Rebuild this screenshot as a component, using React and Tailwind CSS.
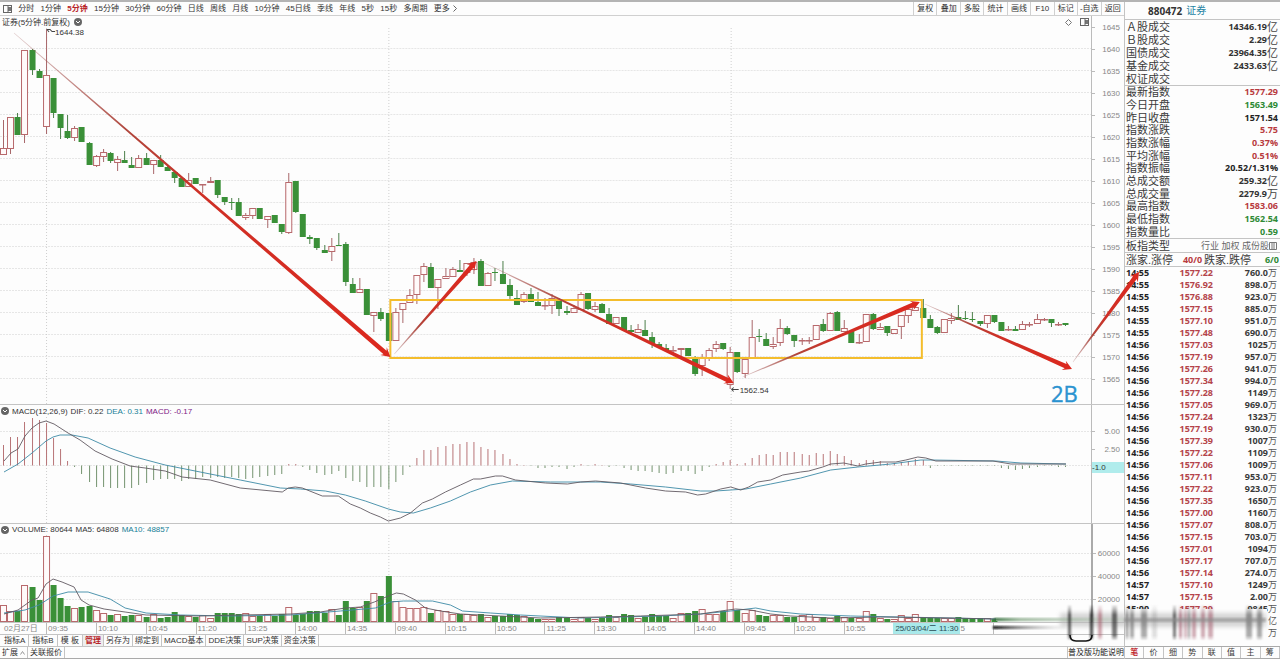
import React, { useState } from "react";

const PERIODS = [
  "分时", "1分钟", "5分钟", "15分钟", "30分钟", "60分钟", "日线", "周线", "月线",
  "10分钟", "45日线", "季线", "年线", "5秒", "15秒", "多周期",
];
const TOOLS = ["复权", "叠加", "多股", "统计", "画线", "F10", "标记", "-自选", "返回"];
const INDICATORS = ["指标A", "指标B", "模 板"];
const TEMPLATES = ["管理", "另存为", "绑定到", "MACD基本", "DDE决策", "SUP决策", "资金决策"];
const SIDE_TABS = ["笔", "价", "细", "势", "联", "值", "主", "筹"];

const TIMES = [
  "09:35", "10:10", "10:45", "11:20", "13:25", "14:00", "14:35", "09:40", "10:15",
  "10:50", "11:25", "13:30", "14:05", "14:40", "09:45", "10:20", "10:55",
];
const PRICES = [
  1645, 1640, 1635, 1630, 1625, 1620, 1615, 1610, 1605,
  1600, 1595, 1590, 1585, 1580, 1575, 1570, 1565,
];

const TURNOVER = [
  ["Ａ股成交", "14346.19", "亿"],
  ["Ｂ股成交", "2.29", "亿"],
  ["国债成交", "23964.35", "亿"],
  ["基金成交", "2433.63", "亿"],
  ["权证成交", "", ""],
];

const QUOTE = [
  ["最新指数", "1577.29", "", "text-[#b83a3e]"],
  ["今日开盘", "1563.49", "", "text-[#2f8a35]"],
  ["昨日收盘", "1571.54", "", "text-[#222]"],
  ["指数涨跌", "5.75", "", "text-[#b83a3e]"],
  ["指数涨幅", "0.37%", "", "text-[#b83a3e]"],
  ["平均涨幅", "0.51%", "", "text-[#b83a3e]"],
  ["指数振幅", "20.52/1.31%", "", "text-[#222]"],
  ["总成交额", "259.32", "亿", "text-[#333]"],
  ["总成交量", "2279.9", "万", "text-[#333]"],
  ["最高指数", "1583.06", "", "text-[#b83a3e]"],
  ["最低指数", "1562.54", "", "text-[#2f8a35]"],
  ["指数量比", "0.59", "", "text-[#2f8a35]"],
];

const TRADES = [
  ["14:55", "1577.22", "760.0", "万"],
  ["14:55", "1576.92", "898.0", "万"],
  ["14:55", "1576.88", "923.0", "万"],
  ["14:55", "1577.15", "885.0", "万"],
  ["14:55", "1577.10", "951.0", "万"],
  ["14:55", "1577.48", "690.0", "万"],
  ["14:56", "1577.03", "1025", "万"],
  ["14:56", "1577.19", "957.0", "万"],
  ["14:56", "1577.26", "941.0", "万"],
  ["14:56", "1577.34", "994.0", "万"],
  ["14:56", "1577.28", "1149", "万"],
  ["14:56", "1577.05", "969.0", "万"],
  ["14:56", "1577.24", "1323", "万"],
  ["14:56", "1577.19", "930.0", "万"],
  ["14:56", "1577.39", "1007", "万"],
  ["14:56", "1577.22", "1109", "万"],
  ["14:56", "1577.06", "1009", "万"],
  ["14:56", "1577.11", "953.0", "万"],
  ["14:56", "1577.22", "923.0", "万"],
  ["14:56", "1577.35", "1650", "万"],
  ["14:56", "1577.00", "1160", "万"],
  ["14:56", "1577.07", "808.0", "万"],
  ["14:56", "1577.15", "703.0", "万"],
  ["14:56", "1577.01", "1094", "万"],
  ["14:56", "1577.17", "707.0", "万"],
  ["14:56", "1577.14", "274.0", "万"],
  ["14:57", "1577.10", "1249", "万"],
  ["14:57", "1577.15", "2.00", "万"],
  ["15:00", "1577.29", "9845", "万"],
  ["", "", "", "亿"],
  ["", "", "", "万"],
];

// up (1) or down (0), body top, body bottom, high, low
const CANDLES = [
  [1, 148, 155, 120, 155], [1, 117, 149, 117, 154], [0, 117, 135, 113, 135], [1, 50, 135, 50, 143],
  [0, 50, 70, 49, 75], [0, 71, 78, 69, 78], [1, 75, 127, 29, 134], [0, 78, 113, 78, 118],
  [0, 114, 128, 114, 139], [0, 131, 138, 115, 139], [1, 128, 138, 126, 141], [0, 127, 142, 127, 142],
  [0, 143, 165, 142, 165], [1, 156, 166, 155, 167], [1, 152, 157, 149, 162], [0, 153, 161, 152, 163],
  [1, 159, 163, 156, 171], [0, 160, 163, 151, 163], [0, 165, 168, 157, 168], [1, 158, 168, 155, 168],
  [0, 158, 165, 153, 165], [1, 160, 165, 160, 174], [0, 160, 167, 155, 167], [0, 167, 171, 165, 171],
  [0, 172, 178, 171, 183], [0, 178, 187, 178, 187], [1, 180, 187, 173, 187], [0, 178, 184, 178, 184],
  [1, 184, 185, 184, 193], [1, 181, 183, 177, 183], [0, 180, 195, 180, 198], [0, 197, 202, 197, 205],
  [0, 202, 203, 198, 210], [0, 202, 216, 198, 216], [1, 215, 218, 213, 220], [1, 208, 216, 208, 219],
  [0, 208, 219, 208, 219], [1, 216, 220, 216, 228], [0, 215, 223, 215, 223], [0, 224, 232, 224, 234],
  [1, 182, 233, 173, 234], [0, 181, 212, 181, 213], [0, 214, 237, 214, 237], [0, 237, 239, 235, 244],
  [0, 238, 248, 238, 250], [0, 250, 253, 245, 253], [1, 246, 252, 238, 261], [0, 245, 246, 233, 246],
  [0, 244, 282, 242, 286], [0, 284, 293, 278, 293], [1, 289, 293, 278, 293], [0, 289, 315, 289, 315],
  [1, 312, 316, 312, 332], [0, 312, 319, 308, 321], [0, 313, 341, 313, 341], [1, 312, 341, 308, 341],
  [1, 303, 310, 303, 323], [1, 295, 303, 289, 303], [1, 275, 295, 275, 304], [1, 266, 275, 263, 282],
  [0, 267, 288, 263, 288], [1, 279, 288, 279, 309], [1, 276, 279, 268, 279], [1, 269, 277, 267, 277],
  [0, 270, 272, 260, 272], [1, 263, 273, 263, 276], [1, 262, 270, 258, 274], [0, 261, 286, 259, 286],
  [1, 273, 286, 272, 286], [0, 272, 273, 268, 281], [0, 274, 284, 261, 284], [0, 285, 296, 279, 300],
  [0, 298, 305, 290, 305], [1, 294, 302, 292, 303], [0, 294, 302, 288, 302], [0, 302, 306, 292, 306],
  [1, 305, 306, 298, 310], [1, 298, 306, 294, 314], [0, 299, 309, 298, 316], [0, 311, 313, 306, 315],
  [1, 308, 313, 305, 313], [1, 294, 310, 292, 310], [0, 293, 309, 293, 310], [1, 306, 310, 302, 312],
  [0, 304, 313, 303, 313], [0, 314, 324, 308, 324], [1, 317, 324, 317, 324], [0, 317, 330, 317, 330],
  [0, 330, 332, 325, 333], [1, 329, 333, 324, 333], [0, 330, 336, 320, 336], [0, 337, 344, 332, 348],
  [0, 344, 347, 342, 348], [0, 348, 351, 344, 352], [1, 350, 351, 346, 355], [1, 348, 350, 348, 357],
  [0, 348, 356, 348, 356], [0, 358, 374, 356, 376], [1, 358, 366, 354, 376], [1, 350, 359, 348, 361],
  [1, 344, 349, 341, 352], [0, 343, 349, 343, 350], [1, 352, 385, 347, 389], [0, 352, 372, 352, 373],
  [1, 359, 374, 359, 378], [1, 337, 358, 320, 358], [0, 336, 337, 329, 342], [0, 339, 346, 333, 346],
  [1, 344, 347, 337, 349], [1, 328, 343, 319, 346], [0, 328, 334, 326, 335], [0, 335, 341, 335, 347],
  [1, 340, 341, 338, 345], [1, 340, 341, 337, 344], [1, 325, 340, 325, 340], [0, 324, 331, 319, 332],
  [1, 313, 331, 312, 331], [0, 312, 331, 311, 331], [1, 328, 332, 320, 332], [0, 331, 343, 331, 343],
  [1, 342, 343, 334, 344], [1, 314, 342, 314, 342], [0, 314, 329, 313, 330], [1, 327, 330, 323, 330],
  [0, 326, 333, 326, 336], [1, 329, 334, 329, 334], [1, 315, 327, 315, 339], [1, 309, 316, 309, 323],
  [1, 307, 311, 303, 311], [0, 308, 318, 299, 318], [0, 319, 328, 315, 328], [0, 327, 333, 326, 334],
  [1, 319, 333, 319, 333], [1, 318, 321, 313, 324], [0, 317, 320, 305, 320], [0, 318, 319, 311, 320],
  [0, 319, 320, 312, 322], [0, 321, 324, 321, 326], [1, 315, 324, 315, 328], [0, 315, 322, 315, 323],
  [0, 322, 331, 322, 331], [1, 329, 330, 326, 331], [0, 329, 331, 326, 331], [1, 324, 330, 321, 330],
  [1, 324, 325, 322, 327], [1, 319, 324, 314, 324], [1, 319, 320, 318, 321], [0, 319, 323, 319, 327],
  [1, 324, 325, 322, 326], [0, 323, 325, 323, 326],
];

const VOLUMES = [
  605, 611, 611, 585, 587, 600, 536, 585, 598, 606, 608, 607, 606, 610, 613, 615, 614, 616, 615, 615,
  617, 614, 618, 617, 612, 615, 616, 617, 615, 618, 613, 613, 613, 614, 613, 616, 616, 614, 616, 614,
  607, 615, 614, 611, 611, 613, 609, 615, 601, 608, 607, 601, 593, 596, 576, 601, 607, 608, 608, 607,
  613, 610, 611, 614, 614, 614, 615, 614, 617, 616, 616, 614, 615, 616, 618, 619, 619, 619, 617, 618,
  619, 617, 618, 619, 618, 615, 617, 614, 615, 618, 617, 614, 616, 616, 618, 613, 613, 611, 609, 614,
  614, 611, 601, 610, 613, 610, 615, 616, 615, 615, 617, 617, 615, 614, 617, 617, 618, 616, 617, 618,
  618, 611, 614, 618, 619, 619, 615, 618, 614, 617, 618, 618, 618, 618, 617, 618, 618, 618, 618, 619,
];

const MACD = [
  445, 437, 437, 422, 418, 420, 423, 438, 449, 461, 467, 474, 482, 487, 487, 488, 488, 488, 488, 485,
  483, 480, 479, 479, 479, 481, 479, 479, 477, 478, 477, 478, 477, 478, 479, 478, 477, 476, 475, 474,
  464, 464, 467, 470, 473, 475, 474, 471, 478, 481, 482, 487, 487, 487, 489, 482, 475, 467, 458, 450,
  450, 447, 446, 444, 444, 442, 442, 447, 449, 450, 454, 459, 464, 465, 466, 468, 468, 467, 467, 469,
  467, 464, 466, 464, 465, 467, 466, 468, 470, 471, 471, 472, 473, 474, 473, 471, 471, 474, 471, 467,
  464, 462, 460, 464, 463, 458, 455, 454, 455, 452, 452, 452, 454, 455, 453, 454, 451, 454, 456, 460,
  463, 460, 460, 461, 463, 463, 462, 461, 459, 460, 468, 466, 466, 466, 466, 466, 466, 466, 466, 466,
  468, 469, 470, 469, 468, 467, 466, 466, 467, 467,
];

const DIF =
  "4,461 11,453 18,449 25,436 32,428 39,423 46,421 54,424 68,433 80,440 95,451 112,459 130,466 145,468 165,471 182,477 210,480 240,488 282,492 288,488 295,487 302,488 322,496 338,496 350,504 360,508 370,513 380,517 388,521 400,518 410,513 422,503 432,499 445,492 460,485 473,479 480,479 495,476 502,476 515,480 545,483 567,484 580,482 595,481 620,483 645,488 665,491 685,492 697,495 705,494 720,489 730,487 740,490 748,487 757,482 770,480 782,475 800,472 808,471 822,467 830,464 843,463 857,466 865,464 880,462 895,462 905,460 917,457 925,458 935,461 992,461 1010,464 1040,464 1065,464";
const DEA =
  "4,472 18,464 32,453 46,441 53,437 60,435 72,435 88,438 110,448 135,457 165,465 200,472 240,480 280,488 300,489 325,491 345,495 365,501 388,509 400,512 413,513 430,508 450,501 470,492 490,485 512,481 550,482 600,482 630,484 665,487 700,491 715,491 745,489 770,484 800,478 830,470 857,467 890,464 920,460 930,460 995,461 1020,463 1065,464";
const MA5 =
  "4,614 18,610 32,600 38,598 46,584 53,579 62,582 74,587 81,600 89,605 104,609 125,612 146,615 200,616 240,615 290,614 320,612 345,608 360,607 374,602 388,596 396,593 403,594 415,600 425,608 440,611 460,614 500,616 540,618 600,617 640,616 700,614 720,611 735,609 750,610 770,614 790,616 830,618 880,617 950,618 995,619";
const MA10 =
  "4,613 25,610 39,605 53,596 68,592 88,592 110,599 125,608 146,613 180,615 230,616 290,615 340,611 375,608 390,602 403,601 432,601 450,605 462,611 490,613 520,615 580,618 660,616 700,614 730,611 755,608 770,611 800,614 850,616 900,617 995,619";

const ARROWS = [
  [14, 33, 390, 357],
  [394, 354, 476, 261],
  [482, 262, 733, 383],
  [742, 377, 919, 302],
  [924, 304, 1071, 369],
  [1072, 362, 1138, 272],
];

const DAY_LINES = [46.5, 388.5, 730.5];

const barX = (i) => Math.floor(3.6 + 7.12 * i) + 0.5;

const Bar = ({ up, x, top, bottom }) =>
  up ? (
    <rect x={x - 3} y={top + 0.5} width="6" height={Math.max(bottom - top - 1, 0.5)} fill="#fffafa" stroke="#b8696c" />
  ) : (
    <rect x={x - 3} y={top} width="6" height={Math.max(bottom - top, 1)} fill="#3a9038" />
  );

// Long tapered shaft with a small head at the far end
const Arrow = ({ points: [x1, y1, x2, y2], id }) => {
  const len = Math.hypot(x2 - x1, y2 - y1);
  const ux = (x2 - x1) / len;
  const uy = (y2 - y1) / len;
  const at = (back, side) =>
    `${(x2 - ux * back - uy * side).toFixed(1)},${(y2 - uy * back + ux * side).toFixed(1)}`;
  return (
    <>
      <linearGradient id={id} gradientUnits="userSpaceOnUse" x1={x1} y1={y1} x2={x2} y2={y2}>
        <stop offset="0" stopColor="#a06060" stopOpacity="0.3" />
        <stop offset="0.3" stopColor="#b0463c" />
        <stop offset="0.5" stopColor="#cf3026" />
        <stop offset="1" stopColor="#dc281e" />
      </linearGradient>
      <polygon
        points={[at(len, 0.3), at(7, 2.3), at(9, 5), at(0, 0), at(9, -5), at(7, -2.3), at(len, -0.3)].join(" ")}
        fill={`url(#${id})`}
      />
    </>
  );
};

const Grid = ({ rows, top, bottom }) => (
  <g>
    {rows.map((y) => (
      <line key={y} x1="0" x2="1090" y1={y} y2={y} strokeDasharray="2 1" stroke="#e6e6e6" />
    ))}
    {DAY_LINES.map((x) => (
      <line key={x} x1={x} x2={x} y1={top} y2={bottom} strokeDasharray="1 2" stroke="#cfcfcf" />
    ))}
  </g>
);

const Toggle = () => (
  <svg className="size-2 shrink-0" viewBox="0 0 8 8">
    <circle cx="4" cy="4" r="4" fill="#666" />
    <path d="M2 3l2 2 2-2" fill="none" stroke="#fff" />
  </svg>
);

const SplitIcon = () => (
  <svg className="h-2 w-[9px] shrink-0" viewBox="0 0 9 8">
    <rect x="0.5" y="0.5" width="8" height="7" fill="none" stroke="#666" />
    <path d="M5 2h3v4h-3z" fill="#777" />
    <path d="M5 1v6" stroke="#666" />
  </svg>
);

const AxisLabel = ({ children, className = "" }) => (
  <div className={`flex items-center justify-between pr-[4px] ${className}`}>
    <span className="h-px w-[3px] bg-[#bbb]" />
    <span className="text-[#888]">{children}</span>
  </div>
);

const Toolbar = ({ period, onSelect }) => (
  <div className="flex h-[14px] items-stretch justify-between border-b border-[#d0d0d0]">
    <div className="flex w-[457px] items-center justify-between pl-[3px]">
      <button type="button" aria-label="布局">
        <SplitIcon />
      </button>
      {PERIODS.map((p) => (
        <button
          key={p}
          type="button"
          onClick={() => onSelect(p)}
          className={p === period ? "font-bold text-[#b8262b]" : ""}
        >
          {p}
        </button>
      ))}
      <button type="button" className="flex items-center gap-[3px]">
        更多
        <svg className="h-[7px] w-[4px]" viewBox="0 0 4 7">
          <path d="M0.5 0.5l3 3-3 3" fill="none" stroke="#666" />
        </svg>
      </button>
    </div>
    <div className="flex w-[211px]">
      {TOOLS.map((t) => (
        <button key={t} type="button" className="flex-1 border-l border-[#d0d0d0]">
          {t}
        </button>
      ))}
    </div>
  </div>
);

const PricePanel = () => (
  <section className="flex border-b border-[#c4c4c4]">
    <div className="min-w-0 flex-1">
      <div className="flex h-3 items-center gap-1 pr-[2px] pl-[2px]">
        <h1>证券(5分钟.前复权)</h1>
        <Toggle />
        <svg className="mr-1 ml-auto size-[7px]" viewBox="0 0 7 7">
          <path d="M3.5 0.5l3 3-3 3-3-3z" fill="none" stroke="#777" />
        </svg>
        <SplitIcon />
      </div>
      <svg
        className="relative z-10 block h-[376px] w-full overflow-visible"
        viewBox="0 28 1090 376"
        preserveAspectRatio="none"
      >
        <Grid rows={PRICES.slice(1).map((_, i) => 48.5 + i * 22)} top={28} bottom={404} />
        {CANDLES.map(([up, top, bottom, high, low], i) => (
          <g key={i}>
            <line x1={barX(i)} x2={barX(i)} y1={high} y2={low} stroke={up ? "#a8676a" : "#4c7f4a"} />
            <Bar up={up} x={barX(i)} top={top} bottom={bottom} />
          </g>
        ))}
        <rect x="390" y="300" width="531" height="58" fill="none" stroke="#f4bd2c" strokeWidth="2" />
        {ARROWS.map((points, i) => (
          <Arrow key={i} points={points} id={`arrow-${i}`} />
        ))}
        <g fill="none" stroke="#444">
          <path d="M47 29.5h3l2 2h3M47 29.5l2 2.5" />
          <path d="M731 389.5h7M733 387.5l-2 2 2 2" />
        </g>
        <g fontSize="8" fill="#333">
          <text x="55" y="35">1644.38</text>
          <text x="739" y="393">1562.54</text>
        </g>
        <text
          x="1050"
          y="402"
          fontSize="22"
          fill="#2a93d0"
          stroke="#2a93d0"
          strokeWidth="0.4"
          className="font-['Open_Sans',sans-serif]"
        >
          2B
        </text>
      </svg>
    </div>
    <div className="w-[33px] border-l border-[#bbb]">
      {PRICES.map((p) => (
        <AxisLabel key={p} className="h-[22px]">{p}</AxisLabel>
      ))}
    </div>
  </section>
);

const MacdPanel = () => (
  <section className="flex border-b border-[#c4c4c4]">
    <div className="min-w-0 flex-1">
      <div className="flex h-3 items-center gap-[3px] pl-[1px] whitespace-nowrap">
        <Toggle />
        <span>MACD(12,26,9)</span>
        <span>DIF: 0.22</span>
        <span className="text-[#187f97]">DEA: 0.31</span>
        <span className="text-[#7d1a86]">MACD: -0.17</span>
      </div>
      <svg className="block h-[106px] w-full" viewBox="0 417 1090 106" preserveAspectRatio="none">
        <Grid rows={[431.5, 465.5]} top={417} bottom={523} />
        {MACD.map((y, i) => (
          <line
            key={i}
            x1={barX(i)}
            x2={barX(i)}
            y1="465.5"
            y2={y}
            stroke={y < 465.5 ? "#b87477" : "#74936f"}
          />
        ))}
        <g fill="none" strokeLinejoin="round" strokeWidth="0.9">
          <polyline points={DEA} stroke="#3d8aa6" />
          <polyline points={DIF} stroke="#625a62" />
        </g>
      </svg>
    </div>
    <div className="w-[33px] border-l border-[#bbb] pt-[17px]">
      <AxisLabel className="h-[18px]">5.00</AxisLabel>
      <AxisLabel className="h-[18px]">2.50</AxisLabel>
      <div className="mt-1 h-[11px] bg-[#b0ecec] leading-[11px] text-[#333]">-1.0</div>
    </div>
  </section>
);

const VolumePanel = () => (
  <section className="flex border-b border-[#c4c4c4]">
    <div className="min-w-0 flex-1">
      <div className="flex h-[11px] items-center gap-[3px] pl-[1px] whitespace-nowrap">
        <Toggle />
        <span>VOLUME: 80644</span>
        <span>MA5: 64808</span>
        <span className="text-[#187f97]">MA10: 48857</span>
      </div>
      <svg className="block h-[87px] w-full" viewBox="0 535 1090 87" preserveAspectRatio="none">
        <Grid rows={[553.5, 576.5, 599.5]} top={535} bottom={622} />
        {VOLUMES.map((y, i) => (
          <Bar key={i} up={CANDLES[i][0]} x={barX(i)} top={y} bottom={622} />
        ))}
        <g fill="none" strokeLinejoin="round" strokeWidth="0.9">
          <polyline points={MA10} stroke="#3d8aa6" />
          <polyline points={MA5} stroke="#625a62" />
        </g>
      </svg>
    </div>
    <div className="w-[33px] border-l-2 border-[#aaa] pt-[18px]">
      {[60000, 40000, 20000].map((v) => (
        <AxisLabel key={v} className="h-[23px]">{v}</AxisLabel>
      ))}
    </div>
  </section>
);

const TimeAxis = () => (
  <div className="flex h-3 border-b border-[#c4c4c4] pr-[33px] leading-[12px] whitespace-nowrap text-[#888]">
    <div className="w-0 flex-[460]">
      <div className="pl-[4px]">02月27日</div>
    </div>
    {TIMES.map((t) => (
      <div key={t} className="w-0 flex-[498]">
        <div className="h-[11px] border-l border-[#bbb] pl-px">{t}</div>
      </div>
    ))}
    <div className="w-0 flex-[498]">
      <span className="inline-block h-[11px] bg-[#a9e9ea] px-[2px] text-[#2b4c55]">25/03/04/二 11:30</span>5
    </div>
    <div className="w-0 flex-[498]" />
    <div className="w-0 flex-[980]">
      <div className="h-[11px] border-l border-[#bbb]" />
    </div>
  </div>
);

const FooterTabs = () => {
  const [active, setActive] = useState("管理");
  const tone = (t) => (t === active ? "bg-[#eee] font-bold text-[#b8262b]" : "");
  return (
    <>
      <div className="flex h-3 border-b border-[#c4c4c4] pl-px">
        {INDICATORS.map((t) => (
          <button
            key={t}
            type="button"
            onClick={() => setActive(t)}
            className={`border-r border-[#c4c4c4] px-[3px] ${tone(t)}`}
          >
            {t}
          </button>
        ))}
        {TEMPLATES.map((t) => (
          <button
            key={t}
            type="button"
            onClick={() => setActive(t)}
            className={`border-r border-[#c4c4c4] px-[2px] ${tone(t)}`}
          >
            {t}
          </button>
        ))}
      </div>
      <div className="flex h-3 justify-between border-b border-[#aaa]">
        <div className="flex">
          <button type="button" className="flex items-center gap-[2px] border-r border-[#c4c4c4] px-[2px]">
            扩展
            <svg className="h-1 w-[5px]" viewBox="0 0 5 4">
              <path d="M0.5 3.5l2-3 2 3" fill="none" stroke="#999" />
            </svg>
          </button>
          <button type="button" className="border-r border-[#c4c4c4] px-[2px]">关联报价</button>
        </div>
        <a href="#help" className="border-l border-[#c4c4c4] leading-[11px] text-[#222]">
          普及版功能说明
        </a>
      </div>
    </>
  );
};

const QuoteRow = ({ label, value, unit, color = "text-[#333]" }) => (
  <div className="flex flex-1 items-center justify-between">
    <dt>{label}</dt>
    <dd className={`flex items-center ${color}`}>
      <b className="font-['Open_Sans',sans-serif] text-[9px]">{value}</b>
      {unit && <span className="text-[#444]">{unit}</span>}
    </dd>
  </div>
);

const QuotePanel = () => {
  const [tab, setTab] = useState("笔");
  return (
    <aside className="flex w-[156px] shrink-0 flex-col border-l border-[#c4c4c4] text-[11px] leading-[12px] text-[#3a3a3a]">
      <h2 className="flex h-[18px] items-center gap-1 border-b border-[#c4c4c4] pl-[23px] text-[10px]">
        <b className="font-['Open_Sans',sans-serif] text-[#333]">880472</b>
        <span className="text-[#1f84a4]">证券</span>
      </h2>
      <dl className="flex h-[66px] flex-col border-b border-[#c4c4c4] pt-px pr-[2px] pl-px">
        {TURNOVER.map(([label, value, unit]) => (
          <QuoteRow key={label} label={label} value={value} unit={unit} />
        ))}
      </dl>
      <dl className="flex h-[153px] flex-col border-b border-[#c4c4c4] pr-[2px] pl-px">
        {QUOTE.map(([label, value, unit, color]) => (
          <QuoteRow key={label} label={label} value={value} unit={unit} color={color} />
        ))}
      </dl>
      <div className="flex h-[14px] items-center justify-between border-b border-[#c4c4c4] pr-[3px] pl-px">
        <span>板指类型</span>
        <span className="flex items-center text-[9px] text-[#666]">
          行业 加权 成份股
          <svg className="size-2" viewBox="0 0 8 8">
            <path d="M0.5 0.5h7v7h-7zM3 1v6M5 1v6" fill="none" stroke="#777" />
          </svg>
        </span>
      </div>
      <div className="flex h-[14px] items-center justify-between border-b border-[#c4c4c4] pr-px pl-px">
        <span>涨家.涨停</span>
        <b className="ml-2 font-['Open_Sans',sans-serif] text-[9px] text-[#b83a3e]">40/0</b>
        <span className="mr-3">跌家.跌停</span>
        <b className="font-['Open_Sans',sans-serif] text-[9px] text-[#2f8a35]">6/0</b>
      </div>
      <table className="w-full table-fixed border-collapse">
        <tbody>
          {TRADES.map(([time, price, amount, unit], i) => (
            <tr key={i} className="h-3 font-['Open_Sans',sans-serif] text-[9px] font-bold">
              <td className="w-[46px] p-0 pl-px text-[#222]">{time}</td>
              <td className="w-[42px] p-0 text-right text-[#b4444a]">{price}</td>
              <td className="p-0 pr-[3px]">
                <div className="flex h-3 items-center justify-end overflow-hidden">
                  {amount}
                  <span className="font-['Liberation_Sans','Noto_Sans_CJK_SC',sans-serif] text-[9px] font-normal text-[#555]">
                    {unit}
                  </span>
                </div>
              </td>
            </tr>
          ))}
        </tbody>
      </table>
      <div className="mt-auto flex h-[13px] border-t border-b border-[#aaa] text-[8px] leading-[11px]">
        {SIDE_TABS.map((t) => (
          <button
            key={t}
            type="button"
            onClick={() => setTab(t)}
            className={`flex-1 border-r border-[#c4c4c4] ${t === tab ? "font-bold text-[#c0272d]" : ""}`}
          >
            {t}
          </button>
        ))}
      </div>
    </aside>
  );
};

// x, width, colour, opacity
const STREAKS = [
  [1068, 3, "#222", 0.8], [1090, 3, "#111", 0.9], [1098, 4, "#a05060", 0.6], [1112, 5, "#333", 0.8],
  [1126, 2, "#444", 0.7], [1130, 4, "#555", 0.6], [1141, 6, "#555", 0.6], [1152, 5, "#888", 0.3],
  [1173, 3, "#333", 0.8], [1179, 3, "#a05568", 0.7], [1184, 3, "#a05568", 0.5], [1188, 2, "#444", 0.6],
  [1192, 4, "#a05568", 0.6], [1201, 4, "#a05568", 0.6], [1208, 5, "#a05568", 0.6],
  [1246, 6, "#555", 0.6], [1257, 5, "#555", 0.6],
];

const Smudge = () => (
  <svg
    className="pointer-events-none absolute right-0 bottom-[15px] z-20 h-[41px] w-[290px]"
    viewBox="990 604 290 41"
  >
    <defs>
      <linearGradient id="fade-v" x1="0" y1="0" x2="0" y2="1">
        <stop offset="0" stopColor="#fff" stopOpacity="0" />
        <stop offset="0.3" stopColor="#fff" stopOpacity="0.9" />
        <stop offset="0.85" stopColor="#fff" stopOpacity="0.8" />
        <stop offset="1" stopColor="#fff" stopOpacity="0" />
      </linearGradient>
      <mask id="streak-mask" maskContentUnits="userSpaceOnUse">
        <rect x="1060" y="605" width="220" height="37" fill="url(#fade-v)" />
      </mask>
      <linearGradient id="fade-green">
        <stop offset="0" stopColor="#2d6a35" />
        <stop offset="0.2" stopColor="#7fa37f" stopOpacity="0.8" />
        <stop offset="1" stopColor="#b9c9b9" stopOpacity="0.4" />
      </linearGradient>
      <linearGradient id="fade-black">
        <stop offset="0" stopColor="#000" />
        <stop offset="0.3" stopColor="#555" stopOpacity="0.8" />
        <stop offset="1" stopColor="#ccc" stopOpacity="0.1" />
      </linearGradient>
      <filter id="soft" x="-20%" y="-20%" width="140%" height="140%">
        <feGaussianBlur stdDeviation="1" />
      </filter>
      <filter id="softer" x="-10%" y="-100%" width="120%" height="300%">
        <feGaussianBlur stdDeviation="2" />
      </filter>
    </defs>
    <rect x="996" y="612" width="94" height="10" fill="#fdfdfd" />
    <rect x="1125" y="610" width="142" height="34" fill="#fdfdfd" />
    <rect x="1060" y="614" width="206" height="14" fill="#bbb" opacity="0.6" filter="url(#softer)" />
    <rect x="994" y="619" width="130" height="3" fill="url(#fade-green)" filter="url(#soft)" />
    <rect x="993" y="627" width="75" height="3" fill="url(#fade-black)" filter="url(#soft)" />
    <g mask="url(#streak-mask)">
      <g filter="url(#soft)">
        {STREAKS.map(([x, w, color, opacity]) => (
          <rect key={x} x={x} y="605" width={w} height="37" fill={color} opacity={opacity} />
        ))}
      </g>
    </g>
    <rect x="1124" y="619" width="142" height="4" fill="#888" opacity="0.6" filter="url(#soft)" />
    <path d="M1070 636q0 6 6 6h10q6 0 6-6" fill="none" stroke="#111" strokeWidth="1.6" />
  </svg>
);

const App = () => {
  const [period, setPeriod] = useState("5分钟");

  return (
    <div className="relative flex w-full overflow-hidden border-t-2 border-[#b4b4b4] bg-[#fdfdfd] font-['Liberation_Sans','Noto_Sans_CJK_SC',sans-serif] text-[8px] leading-[11px] text-[#333]">
      <main className="min-w-0 flex-1">
        <Toolbar period={period} onSelect={setPeriod} />
        <PricePanel />
        <MacdPanel />
        <VolumePanel />
        <TimeAxis />
        <FooterTabs />
      </main>
      <QuotePanel />
      <Smudge />
    </div>
  );
};

export default App;
